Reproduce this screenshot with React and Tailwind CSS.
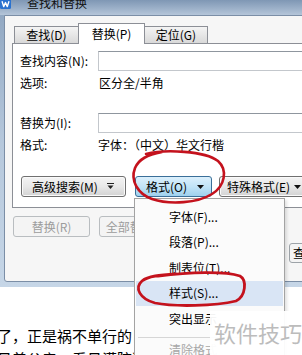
const F = "font-['Noto_Sans_CJK_SC','Noto_Sans',sans-serif]";

function Arrow() {
  return (
    <svg width="7" height="4" viewBox="0 0 7 4" className="shrink-0">
      <path d="M0 0H7L3.5 4Z" fill="#111" />
    </svg>
  );
}

function BarArrow() {
  return (
    <svg width="7" height="7" viewBox="0 0 7 7" className="shrink-0">
      <rect x="0" y="0" width="7" height="1" fill="#222" />
      <path d="M0.5 2.5H6.5L3.5 6Z" fill="#222" />
    </svg>
  );
}

const btn =
  "flex h-[21px] items-center rounded-[3px] border border-[#707070] bg-gradient-to-b from-[#f4f4f4] via-[#e8e8e8] to-[#d3d3d3] shadow-[inset_0_0_0_1px_#fafafa] whitespace-nowrap leading-none";

const disBtn =
  "flex h-[21px] items-center justify-center rounded-[3px] border border-[#b9bdc0] bg-[#f4f4f4] text-[#9c9c9c] whitespace-nowrap leading-none";

function MenuItem({ children, hi, dim }) {
  return (
    <div
      className={`mx-[1px] flex h-[25.5px] items-center pl-[33px] whitespace-nowrap ${
        hi ? "bg-[#d9e5f5]" : ""
      } ${dim ? "text-[#a8a8a8]" : "text-black"}`}
    >
      {children}
    </div>
  );
}

export default function App() {
  return (
    <div className={`relative h-[355px] w-[302px] overflow-hidden bg-white text-[12px] text-black ${F}`}>
      {/* Window */}
      <div className="flex h-[287px] w-[330px] flex-col bg-gradient-to-b from-[#8ea5c0] via-[#b6c8dc] to-[#c6d6e7]">
        {/* Title bar */}
        <div className="flex h-[15px] shrink-0 items-start overflow-hidden bg-gradient-to-b from-[#7f97b4] to-[#b4c5d9]">
          <svg width="11" height="11" viewBox="0 0 11 11" className="-mt-[2px] shrink-0">
            <rect width="11" height="11" rx="1.5" fill="#2a72cf" />
            <path d="M2 3.2L3.7 8.6L5.5 4.6L7.3 8.6L9 3.2" stroke="#fff" strokeWidth="1.4" fill="none" strokeLinejoin="round" />
          </svg>
          <span className="ml-[16px] -mt-[4px] text-[12px] leading-[14px] text-[#111]">查找和替换</span>
        </div>

        {/* Client area */}
        <div className="mb-[5px] ml-[4px] flex flex-1 flex-col rounded-bl-[3px] border border-[#7b8ea6] bg-[#f6f6f6]">
          {/* Tabs */}
          <div className="relative z-10 ml-[9px] mt-[7px] flex h-[20px] items-start">
            <div className="mt-[3px] flex h-[17px] w-[64px] items-center justify-center border border-r-0 border-b-0 border-[#8c8f96] bg-gradient-to-b from-[#f4f4f4] to-[#d9d9d9] leading-none">
              查找(D)
            </div>
            <div className="flex h-[21px] w-[67px] items-center justify-center border border-b-0 border-[#8c8f96] bg-white pb-[1px] leading-none">
              替换(P)
            </div>
            <div className="mt-[3px] flex h-[17px] w-[63px] items-center justify-center border border-l-0 border-b-0 border-[#8c8f96] bg-gradient-to-b from-[#f4f4f4] to-[#d9d9d9] leading-none">
              定位(G)
            </div>
          </div>

          {/* Panel */}
          <div className="ml-[7px] flex flex-col border border-[#8c8f96] bg-white pb-[10px] pl-[7px] pt-[7px]">
            <div className="flex h-[20px] items-center">
              <span className="w-[78px] shrink-0 leading-none">查找内容(N):</span>
              <div className="h-[20px] flex-1 border border-[#c3c7cc] border-t-[#8f969e] bg-white" />
            </div>
            <div className="mt-[2px] flex h-[20px] items-center">
              <span className="w-[79px] shrink-0 leading-none">选项:</span>
              <span className="leading-none">区分全/半角</span>
            </div>
            <div className="mt-[20px] flex h-[20px] items-center">
              <span className="w-[78px] shrink-0 leading-none">替换为(I):</span>
              <div className="h-[20px] flex-1 border border-[#c3c7cc] border-t-[#8f969e] bg-white" />
            </div>
            <div className="mt-[2px] flex h-[20px] items-center">
              <span className="w-[78px] shrink-0 leading-none">格式:</span>
              <span className="leading-none">字体：（中文）华文行楷</span>
            </div>
            <div className="ml-[1px] mt-[21px] flex h-[21px] items-center">
              <div className={`${btn} w-[105px] pl-[10px]`}>
                <span>高级搜索(M)</span>
                <span className="ml-[9px]"><BarArrow /></span>
              </div>
              <div className="ml-[9px] flex h-[21px] w-[77px] items-center rounded-[3px] border border-[#3a6f99] bg-gradient-to-b from-[#dcf0fc] via-[#c2e4f7] to-[#9fd1ee] pl-[10px] leading-none whitespace-nowrap">
                <span>格式(O)</span>
                <span className="ml-[10px]"><Arrow /></span>
              </div>
              <div className={`${btn} ml-[7px] w-[95px] pl-[7px]`}>
                <span>特殊格式(E)</span>
                <span className="ml-[4px]"><Arrow /></span>
              </div>
            </div>
          </div>

          {/* Lower buttons */}
          <div className="ml-[8px] mt-[8px] flex">
            <div className={`${disBtn} w-[77px]`}>替换(R)</div>
            <div className={`${disBtn} ml-[9px] w-[77px]`}>全部替换(A)</div>
          </div>
          <div className="mt-[6px] flex">
            <div className="ml-[284px] flex h-[20px] w-[90px] items-center rounded-[3px] border border-[#9da3a8] bg-[#f4f4f4] pl-[3px] leading-none whitespace-nowrap">
              查找下一处(F)
            </div>
          </div>
        </div>
      </div>

      {/* Document text */}
      <div className="-ml-[3px] pt-[37px] text-[15px] leading-[23px] whitespace-nowrap text-black">
        <div>了，正是祸不单行的日子。</div>
        <div>见着父亲，看见满院狼藉的东西</div>
      </div>

      {/* Dropdown menu */}
      <div className="absolute left-[134px] top-[198px] -bottom-[20px] w-[151px] border border-[#a3a3a3] bg-[#fbfbfb] pt-[5px] shadow-[2px_2px_3px_rgba(0,0,0,0.12)]">
        <MenuItem>字体(F)...</MenuItem>
        <MenuItem>段落(P)...</MenuItem>
        <MenuItem>制表位(T)...</MenuItem>
        <MenuItem hi>样式(S)...</MenuItem>
        <MenuItem>突出显示</MenuItem>
        <div className="mx-[3px] mt-[5px] border-t border-[#d6d6d6]" />
        <MenuItem dim>清除格式</MenuItem>
      </div>

      {/* Watermark */}
      <div className="absolute left-[210px] top-[311px] right-0 bottom-0 bg-white/95 pl-[4px] pt-[10px] text-[22px] leading-[22px] whitespace-nowrap text-[#bcbcbc]">
        软件技巧
      </div>

      {/* Red annotations */}
      <svg className="pointer-events-none absolute left-0 top-0" width="302" height="355" viewBox="0 0 302 355">
        <path
          d="M146 154 C165 149, 205 151, 218 161 C228 170, 225 186, 212 194 C198 203, 170 205, 152 199 C138 194, 130 181, 135 168 C139 159, 147 155, 162 152"
          fill="none"
          stroke="#c4121d"
          strokeWidth="2.6"
          strokeLinecap="round"
        />
        <path
          d="M158 276 C190 272, 225 271, 240 276 C247 280, 246 296, 236 301 C215 306, 175 307, 155 303 C140 299, 134 288, 142 281 C148 276, 160 275, 176 274"
          fill="none"
          stroke="#c4121d"
          strokeWidth="2.8"
          strokeLinecap="round"
        />
      </svg>
    </div>
  );
}
